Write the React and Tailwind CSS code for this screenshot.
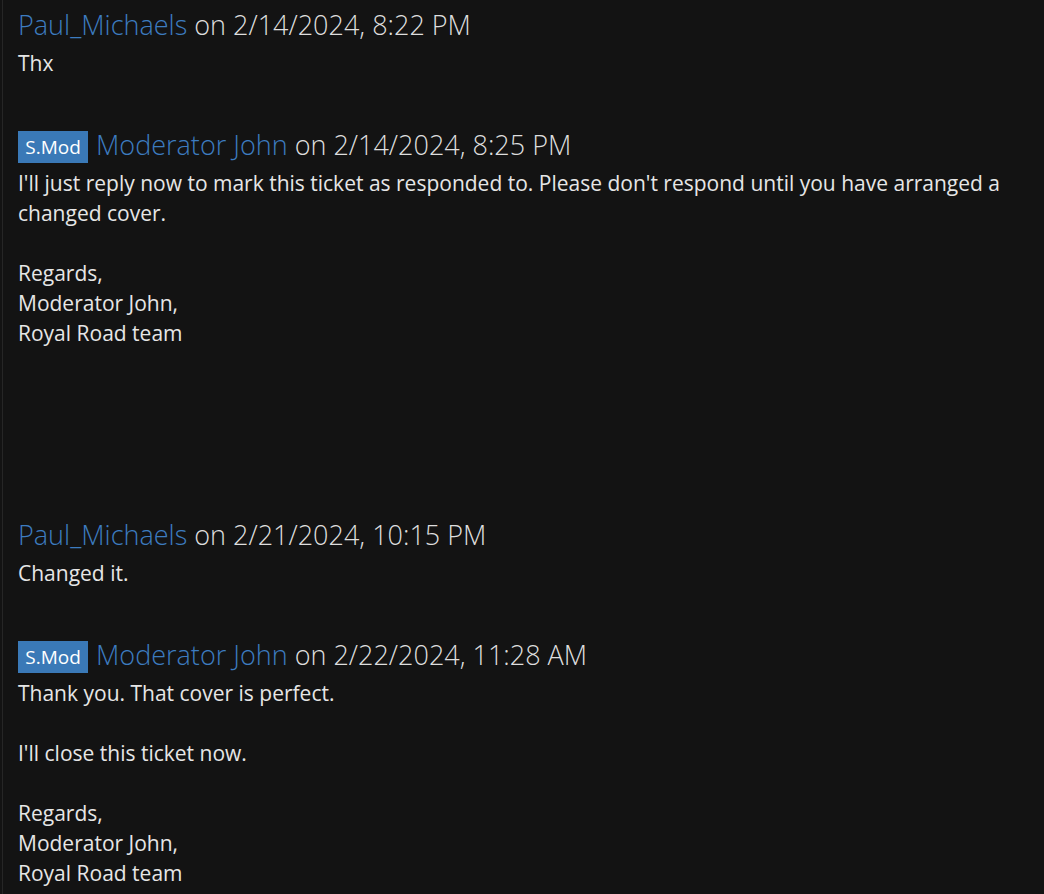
import React from "react";

const messages = [
  { user: "Paul_Michaels", mod: false, date: "2/14/2024, 8:22 PM", body: "Thx" },
  {
    user: "Moderator John",
    mod: true,
    date: "2/14/2024, 8:25 PM",
    body:
      "I'll just reply now to mark this ticket as responded to. Please don't respond until you have arranged a changed cover.\n\nRegards,\nModerator John,\nRoyal Road team\n\n\n\n\n",
  },
  { user: "Paul_Michaels", mod: false, date: "2/21/2024, 10:15 PM", body: "Changed it." },
  {
    user: "Moderator John",
    mod: true,
    date: "2/22/2024, 11:28 AM",
    body: "Thank you. That cover is perfect.\n\nI'll close this ticket now.\n\nRegards,\nModerator John,\nRoyal Road team",
  },
];

export default function App() {
  return (
    <div
      className="h-[894px] overflow-hidden w-full bg-[#131313] pl-[2px]"
      style={{ fontFamily: '"Open Sans", sans-serif' }}
    >
      <div className="min-h-[894px] border-l border-[#262626] pl-[15px] pr-[18px] pt-[7px]">
        {messages.map((m, i) => (
          <div key={i} className="mb-[49px]">
            <div className="flex items-center h-[36px] mb-[5px]">
              {m.mod && (
                <span className="mr-[8px] mt-[4px] flex h-[32px] w-[70px] items-center justify-center bg-[#3a79b7] text-[19px] text-white">
                  S.Mod
                </span>
              )}
              <span className="text-[27px] font-light text-[#3d7cc0] leading-[36px]">{m.user}</span>
              <span className="ml-[7px] text-[27px] font-light text-[#dedede] leading-[36px]">
                on {m.date}
              </span>
            </div>
            <div className="whitespace-pre-wrap text-[21px] leading-[30px] text-[#e6e6e6]">{m.body}</div>
          </div>
        ))}
      </div>
    </div>
  );
}
